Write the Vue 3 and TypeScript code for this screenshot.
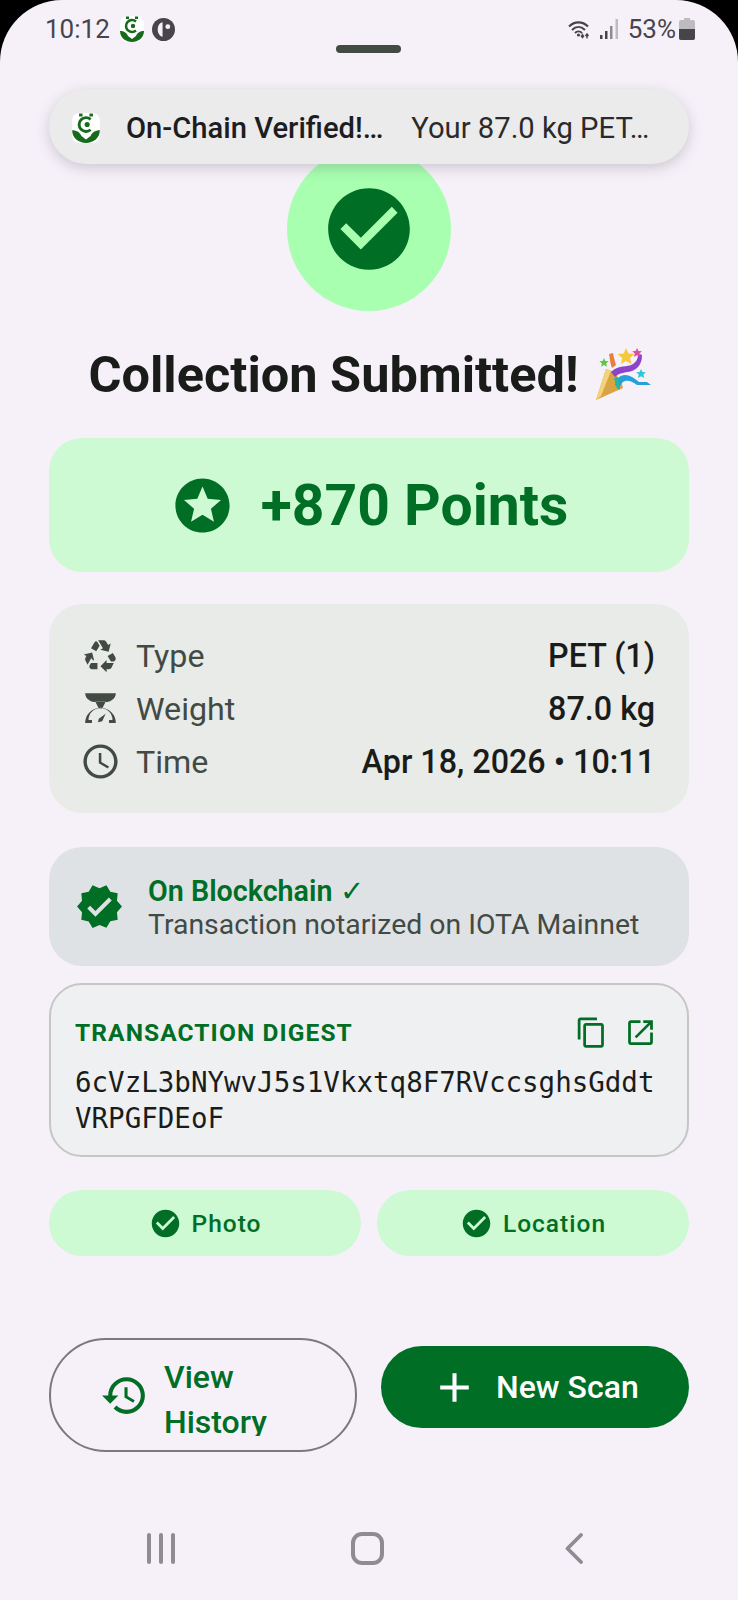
<script setup lang="ts">
const rows = [
  {
    label: 'Type',
    value: 'PET (1)',
    box: '-1.5 -1.5 27 27',
    icon: 'M5.77 7.15 7.2 4.78l1.03-1.71c.39-.65 1.33-.65 1.72 0l1.48 2.46-1.23 2.06-1 1.62-3.43-2.06zm15.95 5.82-1.6-2.66-3.46 2L18.87 16H20c.76 0 1.45-.43 1.79-1.11.14-.28.21-.58.21-.89 0-.36-.1-.71-.28-1.03zM16 21h1.5c.76 0 1.45-.43 1.79-1.11L20.74 17H16v-2l-4 4 4 4v-2zm-6-4H5.7l-.84 1.41c-.3.5-.32 1.12-.06 1.65.28.57.87.94 1.52.94H10v-4zm-3.88-2.65 1.73 1.04L6.48 10l-5.49 1.37 1.73 1.04-.52.87c-.39.65-.41 1.46-.07 2.13l1.34 2.67 2.65-4.73zm10.9-9.21-1.3-2.17C15.35 2.37 14.7 2 14 2h-3.53l3.12 5.2-1.72 1.03 5.49 1.37 1.37-5.49-1.71 1.03z',
  },
  {
    label: 'Weight',
    value: '87.0 kg',
    box: '0 0 24 24',
    icon: 'M3 3H21C20.8 6 18.5 7.8 15.5 8.200H8.500C5.500 7.800 3.200 6 3 3zM9 8 11 12H13L15 8zM3 20.500A9 9 0 0 1 21 20.500H17V18.700H19A7 7 0 0 0 5 18.700H7V20.500zM10.500 20 11 18 15 15 13 19.500z',
  },
  {
    label: 'Time',
    value: 'Apr 18, 2026 • 10:11',
    box: '0 0 24 24',
    icon: 'M11.99 2C6.47 2 2 6.48 2 12s4.47 10 9.99 10C17.52 22 22 17.52 22 12S17.52 2 11.99 2zM12 20c-4.42 0-8-3.58-8-8s3.58-8 8-8 8 3.58 8 8-3.58 8-8 8zm.5-13H11v6l5.25 3.15.75-1.23-4.5-2.67z',
  },
]

const chips = ['Photo', 'Location']

const checkCircle =
  'M12 2C6.48 2 2 6.48 2 12s4.48 10 10 10 10-4.48 10-10S17.52 2 12 2zm-2 15l-5-5 1.41-1.41L10 14.17l7.59-7.59L19 8l-9 9z'
</script>

<template>
  <div class="phone">
    <div class="screen">
      <div class="status-bar">
        <div class="status-left">
          <span class="clock">10:12</span>
          <svg class="app-icon" viewBox="0 0 24 26">
            <rect width="24" height="26" rx="8" fill="#fff" />
            <path d="M0 15C4 15 7 17 8 20L12 23 16 20C17 17 20 15 24 15 24 22 18 26 12 26 6 26 0 22 0 15z" fill="#176a1c" />
            <path d="M16 5.500A6 6 0 1 0 16 14.500" fill="none" stroke="#176a1c" stroke-width="2.500" />
            <circle cx="13" cy="10" r="2.200" fill="#176a1c" />
            <rect x="6" y="0.500" width="3" height="2.500" fill="#176a1c" />
            <rect x="15" y="0.500" width="3" height="2.500" fill="#176a1c" />
          </svg>
          <svg class="p-icon" viewBox="0 0 24 24">
            <circle cx="12" cy="12" r="12" fill="#47454a" />
            <path d="M11 4.500C8 5 6 8 6 12s2 7 5 7.500z" fill="#f6f1f9" />
            <circle cx="16.500" cy="9" r="2.500" fill="#f6f1f9" />
          </svg>
        </div>
        <div class="status-right">
          <svg class="wifi" viewBox="0 0 23 19">
            <g fill="none" stroke="#47454a" stroke-width="2.100">
              <path d="M1 6.500C6.500 1 14.500 1 20 6.500" />
              <path d="M4 10C8 6 13 6 17 10" />
              <path d="M7 13C9 11 12 11 14 13" />
            </g>
            <circle cx="10.500" cy="15" r="1.600" fill="#47454a" />
            <path d="M14.500 13.500v3.500M13 15.500l1.500 2 1.500-2M19 18.500v-4M17.500 16l1.500-2 1.500 2" fill="none" stroke="#47454a" stroke-width="1.400" />
          </svg>
          <svg class="signal" viewBox="0 0 19 20">
            <rect x="0" y="16" width="2.500" height="4" fill="#47454a" />
            <rect x="5" y="12" width="2.500" height="8" fill="#47454a" />
            <rect x="10" y="7" width="2.500" height="13" fill="#8d8b90" />
            <rect x="15.500" y="0" width="2.500" height="20" fill="#bdbbc0" />
          </svg>
          <span class="percent">53%</span>
          <svg class="battery" viewBox="0 0 16 22">
            <path d="M5 0h6v2h3a2 2 0 0 1 2 2v16a2 2 0 0 1-2 2H2a2 2 0 0 1-2-2V4a2 2 0 0 1 2-2h3z" fill="#bdbbc0" />
            <path d="M0 11h16v9a2 2 0 0 1-2 2H2a2 2 0 0 1-2-2z" fill="#47454a" />
          </svg>
        </div>
      </div>

      <div class="handle"></div>

      <div class="toast">
        <svg class="toast-icon" viewBox="0 0 24 26">
          <rect width="24" height="26" rx="6" fill="#fff" />
          <path d="M0 15C4 15 7 17 8 20L12 23 16 20C17 17 20 15 24 15 24 22 18 26 12 26 6 26 0 22 0 15z" fill="#176a1c" />
          <path d="M16 5.500A6 6 0 1 0 16 14.500" fill="none" stroke="#176a1c" stroke-width="2.500" />
          <circle cx="13" cy="10" r="2.200" fill="#176a1c" />
          <rect x="6" y="0.500" width="3" height="2.500" fill="#176a1c" />
          <rect x="15" y="0.500" width="3" height="2.500" fill="#176a1c" />
        </svg>
        <span class="toast-title">On-Chain Verified!…</span>
        <span class="toast-text">Your 87.0 kg PET…</span>
      </div>

      <div class="content">
        <div class="success-circle">
          <svg class="success-icon" viewBox="0 0 24 24"><path :d="checkCircle" /></svg>
        </div>

        <h1 class="title">
          <span>Collection Submitted!</span>
          <svg class="popper" viewBox="0 0 57 52">
            <path d="M0 52 10 21c7 1 15 9 17 19z" fill="#d9a441" />
            <path d="M0 52 10 21c2 0 3 1 5 2L5 48z" fill="#f2d27a" />
            <path d="M16 20c-2-5-2-9-3-14l4-1c1 5 2 9 3 12z" fill="#e8803a" />
            <path d="M15 24c8-8 16-4 22-8 3-2 5-5 5-9 1-2 4-1 4 1 0 7-4 13-10 15-7 2-12 1-17 6z" fill="#8e44c9" />
            <path d="M19 37c1-6 5-10 10-10 5 0 9 3 14 7h8l4 3H41c-4-3-8-5-12-4-3 1-5 4-6 8z" fill="#27a0d8" />
            <path d="M18 30l3 10c1 2 3 2 3 0l-2-11z" fill="#2ab5a0" />
            <path d="M30 0l2.500 5.500 6 .5-4.500 4 1.500 6-5.500-3-5 3 1.200-6-4.500-4 6-.5z" fill="#f5c93b" />
            <path d="M41 0l1.500 3 3.500.3-2.600 2.300.8 3.400-3.200-1.800-3 1.800.8-3.400-2.600-2.300 3.400-.3z" fill="#d94f9b" />
            <path d="M8 10l1.400 3 3.300.3-2.500 2.200.8 3.300-3-1.700-2.900 1.700.8-3.300-2.500-2.200 3.300-.3z" fill="#5cc74a" />
            <path d="M45 21l1.500 3 3.400.3-2.500 2.300.7 3.400-3.100-1.700-3 1.700.7-3.400-2.500-2.300 3.400-.3z" fill="#2fc7d6" />
          </svg>
        </h1>

        <div class="points-card">
          <svg class="points-icon" viewBox="0 0 24 24">
            <path d="M11.990 2C6.470 2 2 6.480 2 12s4.470 10 9.990 10C17.520 22 22 17.520 22 12S17.520 2 11.990 2zm4.240 16L12 15.450 7.770 18l1.120-4.810-3.730-3.230 4.920-.42L12 5l1.920 4.530 4.920.42-3.730 3.230L16.230 18z" />
          </svg>
          <span>+870 Points</span>
        </div>

        <div class="details-card">
          <div v-for="row in rows" :key="row.label" class="detail-row">
            <svg class="detail-icon" :viewBox="row.box"><path :d="row.icon" /></svg>
            <span class="detail-label">{{ row.label }}</span>
            <span class="detail-value">{{ row.value }}</span>
          </div>
        </div>

        <div class="chain-card">
          <svg class="chain-icon" viewBox="0 0 24 24">
            <path d="M23 12l-2.440-2.780.34-3.680-3.610-.82-1.890-3.180L12 3 8.600 1.540 6.710 4.720l-3.610.81.34 3.680L1 12l2.440 2.780-.34 3.690 3.610.82 1.890 3.180L12 21l3.400 1.460 1.890-3.180 3.610-.82-.34-3.680L23 12zm-13 5l-4-4 1.410-1.410L10 14.170l6.590-6.590L18 9l-8 8z" />
          </svg>
          <div>
            <div class="chain-title">On Blockchain <span class="chain-tick">✓</span></div>
            <div class="chain-text">Transaction notarized on IOTA Mainnet</div>
          </div>
        </div>

        <div class="digest-card">
          <div class="digest-head">
            <span class="digest-label">TRANSACTION DIGEST</span>
            <div class="digest-actions">
              <svg viewBox="0 0 24 24"><path d="M16 1H4c-1.100 0-2 .9-2 2v14h2V3h12V1zm3 4H8c-1.100 0-2 .9-2 2v14c0 1.100.9 2 2 2h11c1.100 0 2-.9 2-2V7c0-1.100-.9-2-2-2zm0 16H8V7h11v14z" /></svg>
              <svg viewBox="0 0 24 24"><path d="M19 19H5V5h7V3H5c-1.110 0-2 .9-2 2v14c0 1.100.89 2 2 2h14c1.100 0 2-.9 2-2v-7h-2v7zM14 3v2h3.590l-9.830 9.830 1.410 1.410L19 6.410V10h2V3h-7z" /></svg>
            </div>
          </div>
          <div class="digest-value">6cVzL3bNYwvJ5s1Vkxtq8F7RVccsghsGddtVRPGFDEoF</div>
        </div>

        <div class="chips">
          <div v-for="chip in chips" :key="chip" class="chip">
            <svg viewBox="0 0 24 24"><path :d="checkCircle" /></svg>
            <span>{{ chip }}</span>
          </div>
        </div>

        <div class="actions">
          <button class="btn-outline">
            <svg viewBox="0 0 24 24"><path d="M13 3c-4.970 0-9 4.030-9 9H1l3.890 3.890.07.14L9 12H6c0-3.870 3.130-7 7-7s7 3.130 7 7-3.130 7-7 7c-1.930 0-3.680-.79-4.940-2.060l-1.420 1.420C8.270 19.990 10.510 21 13 21c4.970 0 9-4.030 9-9s-4.030-9-9-9zm-1 5v5l4.280 2.540.72-1.210-3.500-2.080V8H12z" /></svg>
            <span class="btn-outline-text">View History</span>
          </button>
          <button class="btn-filled">
            <svg viewBox="0 0 24 24"><path d="M19 13h-6v6h-2v-6H5v-2h6V5h2v6h6v2z" /></svg>
            <span>New Scan</span>
          </button>
        </div>
      </div>

      <div class="nav-bar">
        <div class="nav-recent"><i></i><i></i><i></i></div>
        <div class="nav-home"></div>
        <svg class="nav-back" viewBox="0 0 18 31">
          <path d="M16 2 2.500 15.500 16 29" fill="none" stroke="#8e8b92" stroke-width="3.800" stroke-linecap="round" stroke-linejoin="round" />
        </svg>
      </div>
    </div>
  </div>
</template>

<style scoped>
.phone {
  width: 738px;
  height: 1600px;
  background: #000;
  font-family: Roboto, "Noto Sans", sans-serif;
}

.screen {
  position: relative;
  height: 1600px;
  background: #f6f1f9;
  border-radius: 62px 62px 0 0;
  overflow: hidden;
}

.status-bar {
  display: flex;
  justify-content: space-between;
  align-items: center;
  height: 58px;
  padding: 0 43px 0 45px;
  color: #47454a;
  font-size: 26px;
}

.status-left,
.status-right {
  display: flex;
  align-items: center;
}

.app-icon {
  width: 24px;
  height: 26px;
  margin-left: 10px;
}

.p-icon {
  width: 23px;
  height: 23px;
  margin-left: 8px;
}

.wifi {
  width: 23px;
  height: 19px;
}

.signal {
  width: 19px;
  height: 20px;
  margin-left: 9px;
}

.percent {
  margin-left: 9px;
}

.battery {
  width: 16px;
  height: 22px;
  margin-left: 3px;
}

.handle {
  position: absolute;
  top: 45px;
  left: 336px;
  width: 65px;
  height: 8px;
  border-radius: 4px;
  background: #424a44;
}

.toast {
  position: absolute;
  top: 89px;
  left: 49px;
  z-index: 2;
  box-sizing: border-box;
  display: flex;
  align-items: center;
  width: 640px;
  height: 75px;
  padding: 3px 0 0 23px;
  border-radius: 38px;
  background: #ebebeb;
  box-shadow: 0 4px 14px rgba(60, 50, 70, 0.22);
  font-size: 29.2px;
  color: #1d1d1f;
}

.toast-icon {
  width: 28px;
  height: 30px;
}

.toast-title {
  margin-left: 26px;
  font-weight: 500;
}

.toast-text {
  margin-left: 28px;
  color: #2a2a2c;
}

.content {
  padding: 89px 49px 0;
}

.success-circle {
  display: flex;
  align-items: center;
  justify-content: center;
  width: 164px;
  height: 164px;
  margin: 0 auto;
  border-radius: 50%;
  background: #a8ffb0;
}

.success-icon {
  width: 98px;
  height: 98px;
  fill: #006e25;
}

.title {
  display: flex;
  align-items: center;
  justify-content: center;
  gap: 17px;
  height: 60px;
  margin: 33px 0 34px;
  padding-left: 3px;
  font-size: 50.500px;
  font-weight: 700;
  color: #1a1c1a;
}

.popper {
  width: 57px;
  height: 52px;
}

.points-card {
  display: flex;
  align-items: center;
  justify-content: center;
  gap: 26px;
  height: 134px;
  border-radius: 33px;
  background: #cdf9d3;
  color: #006e25;
  font-size: 57px;
  font-weight: 700;
}

.points-icon {
  width: 65px;
  height: 65px;
  fill: #006e25;
}

.details-card {
  box-sizing: border-box;
  height: 209px;
  margin-top: 32px;
  padding: 25px 33px;
  border-radius: 33px;
  background: #e9ebe8;
}

.detail-row {
  display: flex;
  align-items: center;
  height: 53px;
}

.detail-icon {
  width: 41px;
  height: 41px;
  margin-left: -2px;
  fill: #424a44;
}

.detail-label {
  margin-left: 15px;
  font-size: 32.200px;
  color: #424a44;
}

.detail-value {
  margin-left: auto;
  margin-right: 1px;
  font-size: 32.300px;
  font-weight: 500;
  color: #1a1c1a;
}

.chain-card {
  display: flex;
  align-items: center;
  box-sizing: border-box;
  height: 119px;
  margin-top: 34px;
  padding: 2px 0 0 26px;
  border-radius: 33px;
  background: #dee2e5;
}

.chain-icon {
  width: 49px;
  height: 49px;
  margin-top: -2px;
  margin-right: 24px;
  fill: #006e25;
}

.chain-title {
  font-size: 28.700px;
  line-height: 33px;
  font-weight: 600;
  color: #006e25;
}

.chain-tick {
  font-weight: 400;
}

.chain-text {
  font-size: 28.400px;
  line-height: 33px;
  color: #424a44;
}

.digest-card {
  box-sizing: border-box;
  height: 174px;
  margin-top: 17px;
  padding: 31px 24px 0;
  border: 2px solid #c4c7c4;
  border-radius: 33px;
  background: #eff0f2;
}

.digest-head {
  display: flex;
  align-items: center;
  justify-content: space-between;
  height: 33px;
}

.digest-label {
  font-size: 24.500px;
  font-weight: 700;
  letter-spacing: 1.100px;
  color: #006e25;
}

.digest-actions {
  display: flex;
  gap: 16px;
  margin-right: 6px;
}

.digest-actions svg {
  width: 33px;
  height: 33px;
  fill: #006e25;
}

.digest-value {
  margin-top: 15px;
  font-family: "DejaVu Sans Mono", monospace;
  font-size: 27.500px;
  line-height: 36px;
  color: #1a1c1a;
  word-break: break-all;
}

.chips {
  display: grid;
  grid-template-columns: 1fr 1fr;
  gap: 16px;
  margin-top: 33px;
}

.chip {
  display: flex;
  align-items: center;
  justify-content: center;
  gap: 10px;
  height: 66px;
  border-radius: 33px;
  background: #cdf9d3;
  color: #006e25;
  font-size: 24.500px;
  font-weight: 500;
  letter-spacing: 1px;
}

.chip svg {
  width: 33px;
  height: 33px;
  fill: #006e25;
}

.actions {
  display: flex;
  align-items: flex-start;
  justify-content: space-between;
  margin-top: 82px;
}

.btn-outline,
.btn-filled {
  display: flex;
  align-items: center;
  box-sizing: border-box;
  padding: 0;
  font-family: inherit;
  font-size: 32px;
  font-weight: 500;
}

.btn-outline {
  width: 308px;
  height: 114px;
  padding-left: 49px;
  border: 2px solid #7a7a7c;
  border-radius: 57px;
  background: transparent;
  color: #006e25;
}

.btn-outline svg {
  flex: none;
  width: 49px;
  height: 49px;
  fill: #006e25;
}

.btn-outline-text {
  display: block;
  width: 110px;
  max-height: 81px;
  margin-left: 15px;
  overflow: hidden;
  line-height: 45px;
  text-align: left;
}

.btn-filled {
  width: 308px;
  height: 82px;
  margin-top: 8px;
  padding-left: 49px;
  gap: 17px;
  border: none;
  border-radius: 41px;
  background: #006e25;
  color: #fff;
}

.btn-filled svg {
  width: 49px;
  height: 49px;
  fill: #fff;
}

.nav-bar {
  display: flex;
  align-items: center;
  justify-content: space-between;
  margin-top: 80px;
  padding: 0 155px 0 147px;
}

.nav-recent {
  display: flex;
  gap: 8px;
}

.nav-recent i {
  display: block;
  width: 4px;
  height: 31px;
  border-radius: 2px;
  background: #8e8b92;
}

.nav-home {
  box-sizing: border-box;
  width: 33px;
  height: 33px;
  margin-right: 6px;
  border: 4px solid #8e8b92;
  border-radius: 11px;
}

.nav-back {
  width: 18px;
  height: 31px;
}
</style>
